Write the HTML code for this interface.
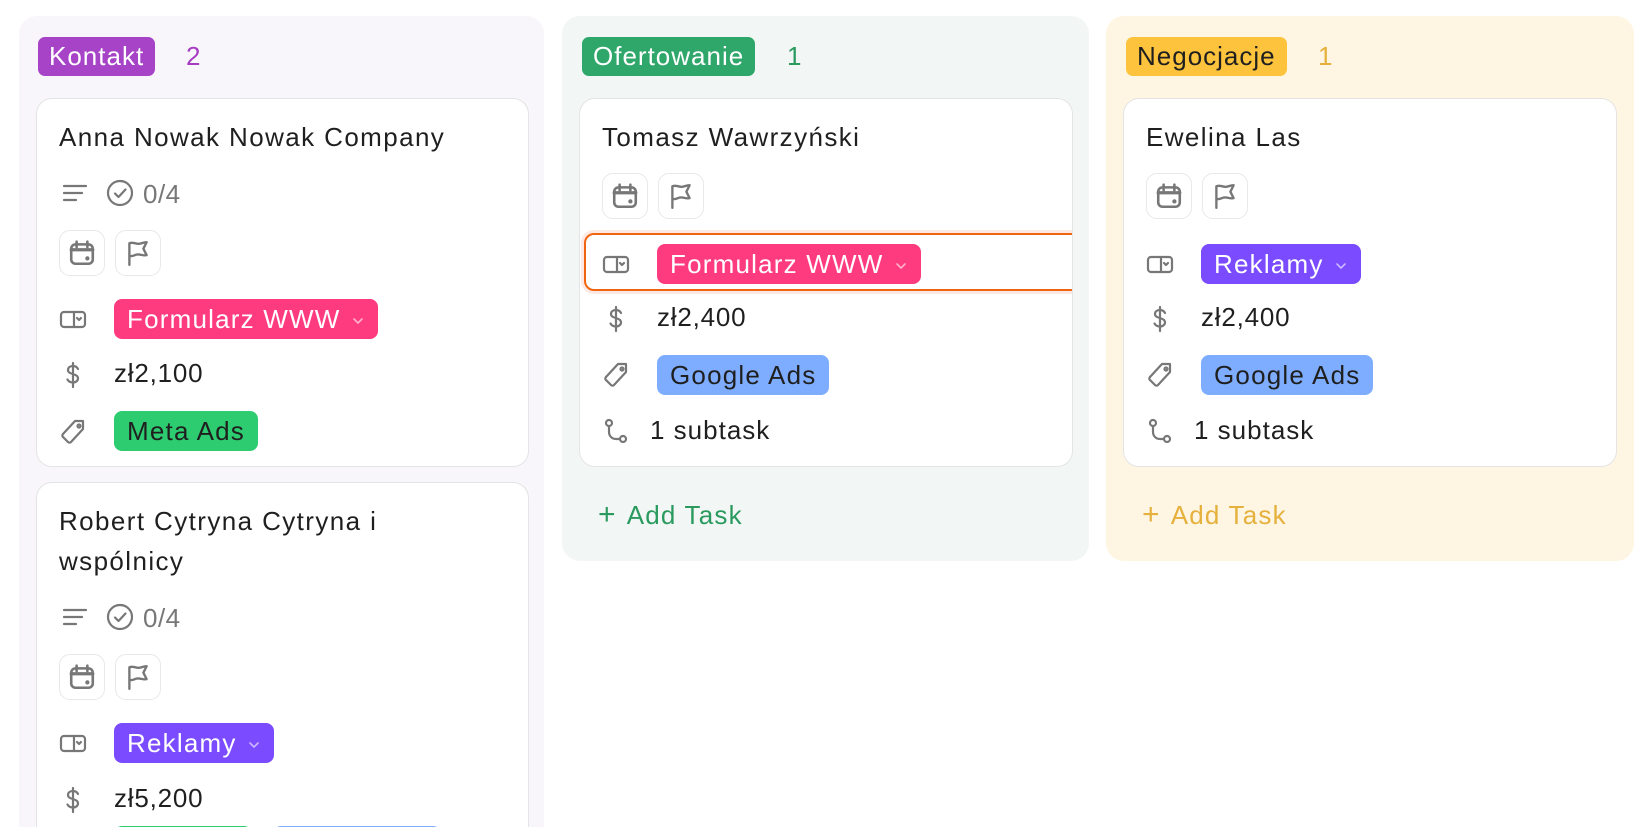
<!DOCTYPE html>
<html><head><meta charset="utf-8">
<style>
*{box-sizing:border-box;margin:0;padding:0}
html,body{width:1648px;height:827px;overflow:hidden}
body{background:#fff;font-family:"Liberation Sans",sans-serif;color:#1f1f1f;position:relative}
.col{position:absolute;border-radius:18px}
.hp{position:absolute;top:37px;height:39px;border-radius:7px;font-size:26px;line-height:39px;padding:0 11px;letter-spacing:1px}
.cnt{position:absolute;top:37px;line-height:39px;font-size:26px}
.card{position:absolute;background:#fff;border:1.5px solid #e4e4e4;border-radius:16px;overflow:hidden}
.t{position:absolute;font-size:26px;letter-spacing:1.4px;white-space:nowrap}
.ic{position:absolute;width:30px;height:30px}
.pill{position:absolute;height:40px;border-radius:8px;font-size:26px;line-height:40px;padding:0 13px;letter-spacing:1.2px;white-space:nowrap}
.btn{position:absolute;width:46px;height:46px;border:1.5px solid #e8e8e8;border-radius:11px}
.btn svg{position:absolute;left:8px;top:8px}
svg{overflow:visible}
.add{position:absolute;font-size:26px;letter-spacing:1.2px}
</style></head><body>

<div class="col" style="left:19px;top:16px;width:525px;height:811px;border-radius:18px 18px 0 0;background:#f8f6fb"></div>
<div class="col" style="left:562px;top:16px;width:527px;height:545px;background:#f2f6f4"></div>
<div class="col" style="left:1106px;top:16px;width:528px;height:545px;background:#fef6e3"></div>

<div class="hp" style="left:38px;background:#a643c7;color:#fff">Kontakt</div>
<div class="cnt" style="left:186px;color:#a53cc2">2</div>
<div class="hp" style="left:582px;background:#2fa66a;color:#fff">Ofertowanie</div>
<div class="cnt" style="left:787px;color:#2a9a5f">1</div>
<div class="hp" style="left:1126px;background:#fdc33c;color:#1f1f1f">Negocjacje</div>
<div class="cnt" style="left:1318px;color:#e6b03c">1</div>

<svg width="0" height="0" style="position:absolute">
<defs>
<symbol id="lines" viewBox="0 0 30 30"><g stroke="#777" stroke-width="2.2" stroke-linecap="round"><path d="M4 8h22M4 15h18M4 22h12"/></g></symbol>
<symbol id="check" viewBox="0 0 30 30"><g fill="none" stroke="#777" stroke-width="2.2" stroke-linecap="round" stroke-linejoin="round"><circle cx="15" cy="15" r="12"/><path d="M10 15.5l3.5 3.5 7-7.5"/></g></symbol>
<symbol id="cal" viewBox="0 0 26 26"><g fill="none" stroke="#777" stroke-width="2.4" stroke-linecap="round" stroke-linejoin="round"><rect x="3" y="5" width="20" height="18" rx="4"/><path d="M8 2.5v5M18 2.5v5"/><path d="M3 10h20" stroke-width="3"/></g><circle cx="18" cy="18" r="2" fill="#777"/></symbol>
<symbol id="flag" viewBox="0 0 26 26"><g fill="none" stroke="#777" stroke-width="2.2" stroke-linecap="round" stroke-linejoin="round"><path d="M5 24V4c4-2 7 2 11 0 2-0.5 4-1 5-1l-3 6 3 6c-4 1-7-2-11 0-2 1-5 1-5 1"/></g></symbol>
<symbol id="sel" viewBox="0 0 30 30"><g fill="none" stroke="#777" stroke-width="2.2" stroke-linecap="round" stroke-linejoin="round"><rect x="3" y="8" width="24" height="15" rx="3"/><path d="M16 8v15M19 14l2 2 2-2"/></g></symbol>
<symbol id="dollar" viewBox="0 0 30 30"><g fill="none" stroke="#777" stroke-width="2.2" stroke-linecap="round"><path d="M15 3v24M20 9c-1-2-3-3-5-3-3 0-5 1.5-5 4 0 5 10 3 10 8.5 0 2.5-2.5 4-5 4-2.5 0-4.5-1-5.5-3"/></g></symbol>
<symbol id="tag" viewBox="0 0 30 30"><g fill="none" stroke="#777" stroke-width="2.2" stroke-linejoin="round"><path d="M17 4h8v8L13 25a2 2 0 0 1-3 0l-5-5a2 2 0 0 1 0-3z"/><circle cx="21" cy="9" r="1.5"/></g></symbol>
<symbol id="sub" viewBox="0 0 30 30"><g fill="none" stroke="#777" stroke-width="2.2" stroke-linecap="round"><circle cx="8" cy="6" r="3"/><circle cx="22" cy="22" r="3"/><path d="M8 9v6c0 4 3 7 7 7h4"/></g></symbol>
<symbol id="chev" viewBox="0 0 14 14"><path d="M3 5l4 4 4-4" fill="none" stroke="rgba(255,255,255,0.6)" stroke-width="1.6" stroke-linecap="round" stroke-linejoin="round"/></symbol>
</defs></svg>

<div class="card" style="left:36px;top:98px;width:493px;height:369px">
  <div class="t" style="left:22px;top:23px">Anna Nowak Nowak Company</div>
  <svg class="ic" style="left:23px;top:79px"><use href="#lines"/></svg>
  <svg class="ic" style="left:68px;top:79px"><use href="#check"/></svg>
  <div class="t" style="left:106px;top:80px;color:#777;letter-spacing:0.5px">0/4</div>
  <div class="btn" style="left:22px;top:131px"><svg width="28" height="28"><use href="#cal"/></svg></div>
  <div class="btn" style="left:78px;top:131px"><svg width="28" height="28"><use href="#flag"/></svg></div>
  <svg class="ic" style="left:21px;top:205px"><use href="#sel"/></svg>
  <div class="pill" style="left:77px;top:200px;background:#fe3b7e;color:#fff">Formularz WWW <svg width="14" height="14" style="margin-left:2px"><use href="#chev"/></svg></div>
  <svg class="ic" style="left:21px;top:261px"><use href="#dollar"/></svg>
  <div class="t" style="left:77px;top:259px;letter-spacing:0.8px">zł2,100</div>
  <svg class="ic" style="left:21px;top:318px"><use href="#tag"/></svg>
  <div class="pill" style="left:77px;top:312px;background:#2ecc71;color:#1f1f1f">Meta Ads</div>
</div>

<div class="card" style="left:36px;top:482px;width:493px;height:360px;border-radius:16px 16px 0 0">
  <div class="t" style="left:22px;top:23px">Robert Cytryna Cytryna i</div>
  <div class="t" style="left:22px;top:63px">wspólnicy</div>
  <svg class="ic" style="left:23px;top:119px"><use href="#lines"/></svg>
  <svg class="ic" style="left:68px;top:119px"><use href="#check"/></svg>
  <div class="t" style="left:106px;top:120px;color:#777;letter-spacing:0.5px">0/4</div>
  <div class="btn" style="left:22px;top:171px"><svg width="28" height="28"><use href="#cal"/></svg></div>
  <div class="btn" style="left:78px;top:171px"><svg width="28" height="28"><use href="#flag"/></svg></div>
  <svg class="ic" style="left:21px;top:245px"><use href="#sel"/></svg>
  <div class="pill" style="left:77px;top:240px;background:#7b4bff;color:#fff">Reklamy <svg width="14" height="14" style="margin-left:2px"><use href="#chev"/></svg></div>
  <svg class="ic" style="left:21px;top:302px"><use href="#dollar"/></svg>
  <div class="t" style="left:77px;top:300px;letter-spacing:0.8px">zł5,200</div>
  <div class="pill" style="left:77px;top:343px;width:138px;background:#2ecc71"></div>
  <div class="pill" style="left:236px;top:343px;width:168px;background:#7eadff"></div>
</div>

<div class="card" style="left:579px;top:98px;width:494px;height:369px">
  <div class="t" style="left:22px;top:23px">Tomasz Wawrzyński</div>
  <div class="btn" style="left:22px;top:74px"><svg width="28" height="28"><use href="#cal"/></svg></div>
  <div class="btn" style="left:78px;top:74px"><svg width="28" height="28"><use href="#flag"/></svg></div>
  <div style="position:absolute;left:4px;top:134px;width:500px;height:58px;border:2px solid #f0650f;border-radius:10px;box-shadow:0 0 0 3px #fde9e4"></div>
  <svg class="ic" style="left:21px;top:150px"><use href="#sel"/></svg>
  <div class="pill" style="left:77px;top:145px;background:#fe3b7e;color:#fff">Formularz WWW <svg width="14" height="14" style="margin-left:2px"><use href="#chev"/></svg></div>
  <svg class="ic" style="left:21px;top:205px"><use href="#dollar"/></svg>
  <div class="t" style="left:77px;top:203px;letter-spacing:0.8px">zł2,400</div>
  <svg class="ic" style="left:21px;top:261px"><use href="#tag"/></svg>
  <div class="pill" style="left:77px;top:256px;background:#7eadff;color:#1f1f1f">Google Ads</div>
  <svg class="ic" style="left:21px;top:318px"><use href="#sub"/></svg>
  <div class="t" style="left:70px;top:316px;letter-spacing:1px">1 subtask</div>
</div>
<div class="add" style="left:598px;top:498px;color:#2a9a5f"><span style="font-size:30px;font-weight:300;margin-right:10px">+</span>Add Task</div>

<div class="card" style="left:1123px;top:98px;width:494px;height:369px">
  <div class="t" style="left:22px;top:23px">Ewelina Las</div>
  <div class="btn" style="left:22px;top:74px"><svg width="28" height="28"><use href="#cal"/></svg></div>
  <div class="btn" style="left:78px;top:74px"><svg width="28" height="28"><use href="#flag"/></svg></div>
  <svg class="ic" style="left:21px;top:150px"><use href="#sel"/></svg>
  <div class="pill" style="left:77px;top:145px;background:#7b4bff;color:#fff">Reklamy <svg width="14" height="14" style="margin-left:2px"><use href="#chev"/></svg></div>
  <svg class="ic" style="left:21px;top:205px"><use href="#dollar"/></svg>
  <div class="t" style="left:77px;top:203px;letter-spacing:0.8px">zł2,400</div>
  <svg class="ic" style="left:21px;top:261px"><use href="#tag"/></svg>
  <div class="pill" style="left:77px;top:256px;background:#7eadff;color:#1f1f1f">Google Ads</div>
  <svg class="ic" style="left:21px;top:318px"><use href="#sub"/></svg>
  <div class="t" style="left:70px;top:316px;letter-spacing:1px">1 subtask</div>
</div>
<div class="add" style="left:1142px;top:498px;color:#e6b03c"><span style="font-size:30px;font-weight:300;margin-right:10px">+</span>Add Task</div>

</body></html>
